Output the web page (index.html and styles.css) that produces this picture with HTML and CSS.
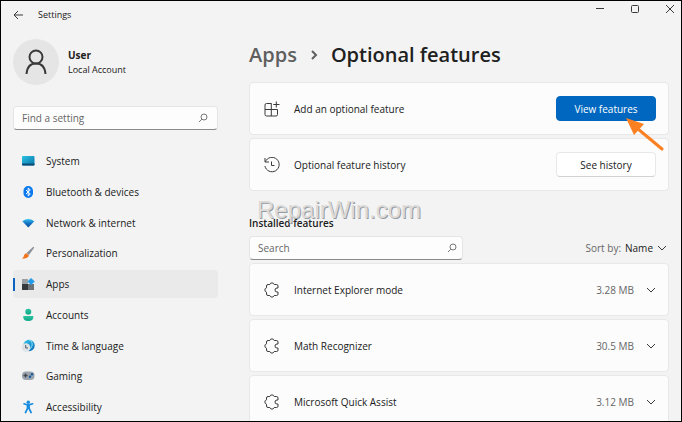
FILE: index.html
```html
<!DOCTYPE html>
<html lang="en">
<head>
<meta charset="utf-8">
<title>Settings</title>
<link rel="stylesheet" href="styles.css">
</head>
<body>
<svg class="defs" aria-hidden="true">
  <defs>
    <linearGradient id="sys" x1="0" y1="0" x2="1" y2="1"><stop offset="0" stop-color="#2bc3e2"/><stop offset="1" stop-color="#0873a8"/></linearGradient>
    <linearGradient id="net" x1="0" y1="0" x2="0" y2="1"><stop offset="0" stop-color="#35c5f0"/><stop offset=".5" stop-color="#1673c5"/><stop offset="1" stop-color="#0b4a94"/></linearGradient>
    <linearGradient id="acc" x1="0" y1="0" x2="0" y2="1"><stop offset="0" stop-color="#2bc2a0"/><stop offset="1" stop-color="#0fa98a"/></linearGradient>
    <linearGradient id="globe" x1="0" y1="0" x2="1" y2="1"><stop offset="0" stop-color="#35c8ef"/><stop offset="1" stop-color="#0868b4"/></linearGradient>
    <symbol id="puzzle" viewBox="0 0 16 16"><path d="M2.500 4Q2.500 2.500 4 2.500H5.800A2.300 2.300 0 0 1 10.200 2.500H12.500Q14 2.500 14 4V6H13A2 2 0 0 0 13 10H14V12Q14 13.500 12.500 13.500H10.200A2.300 2.300 0 0 1 5.800 13.500H4Q2.500 13.500 2.500 12V10.200A2.300 2.300 0 0 1 2.500 5.800Z"/></symbol>
    <symbol id="lens" viewBox="0 0 10 10"><circle cx="6" cy="4" r="3"/><path d="M3.800 6.200L1 9"/></symbol>
    <symbol id="down" viewBox="0 0 10 10"><path d="M1 3L5 7L9 3"/></symbol>
  </defs>
</svg>
<div class="window">
  <aside class="sidebar">
    <header class="titlebar">
      <button class="plain" aria-label="Back"><svg class="line" width="10" height="10" viewBox="0 0 10 10"><path d="M5 1L1 5L5 9M1 5H10"/></svg></button>
      <span>Settings</span>
    </header>
    <div class="profile">
      <div class="avatar"><svg class="line" width="22" height="26" viewBox="0 0 22 26"><circle cx="11" cy="8" r="6.500"/><path d="M1.500 25C2 18.500 5.500 14.500 11 14.500S20 18.500 20.500 25"/></svg></div>
      <div><strong>User</strong><p>Local Account</p></div>
    </div>
    <div class="search">
      <input type="text" placeholder="Find a setting" aria-label="Find a setting">
      <svg class="line" width="10" height="10"><use href="#lens"/></svg>
    </div>
    <nav class="nav">
      <a href="#"><svg width="14" height="14" viewBox="0 0 14 14"><rect x="1" y="2" width="12.500" height="9.500" rx="1" fill="url(#sys)"/><path d="M1 9.500H13.500V10.500Q13.500 11.500 12.500 11.500H2Q1 11.500 1 10.500Z" fill="#0c4c75"/></svg>System</a>
      <a href="#"><svg width="14" height="14" viewBox="0 0 14 14"><rect x="2.500" y="1" width="9.500" height="12" rx="4.700" fill="#0b78ee"/><path d="M5 5L9.300 9L7.200 11V3L9.300 5L5 9" fill="none" stroke="#fff"/></svg>Bluetooth &amp; devices</a>
      <a href="#"><svg width="14" height="14" viewBox="0 0 14 14"><path d="M1.300 5.300Q7.300 .5 13.300 5.300L7.300 11.500Z" fill="url(#net)"/></svg>Network &amp; internet</a>
      <a href="#"><svg width="14" height="14" viewBox="0 0 14 14"><path d="M12 1Q13.500 .3 13 2L8 9L5.500 7Z" fill="#8b929a"/><path d="M5.300 7.200L7.900 9.200Q7.500 12.500 1 12.800Q2.800 11.500 3 9.500Q3.300 7.500 5.300 7.200" fill="#ee741e"/></svg>Personalization</a>
      <a href="#" class="current" aria-current="page"><svg width="14" height="14" viewBox="0 0 14 14"><path d="M1 2H7V7H1Z" fill="#9ba0a5"/><path d="M1 7H7V13H1Z" fill="#35393e"/><path d="M7 7H13V13H7Z" fill="#6d7277"/><path d="M10 1L13.800 4.500L10 8L6.500 4.500Z" fill="#249bea"/></svg>Apps</a>
      <a href="#"><svg width="14" height="14" viewBox="0 0 14 14"><circle cx="7.300" cy="3.800" r="3" fill="url(#acc)"/><path d="M2.300 8H12.300Q13 13 7.300 13T2.300 8" fill="url(#acc)"/></svg>Accounts</a>
      <a href="#"><svg width="14" height="14" viewBox="0 0 14 14"><circle cx="8" cy="6.500" r="5.700" fill="url(#globe)"/><path d="M8 1Q12 2 11 7Q10 10 7 11" fill="none" stroke="#8fe2f6"/><circle cx="5" cy="8.500" r="4.300" fill="#dce2e6"/><path d="M4.700 6V9H7" fill="none" stroke="#4d5b65"/></svg>Time &amp; language</a>
      <a href="#"><svg width="14" height="14" viewBox="0 0 14 14"><rect x="1" y="2.500" width="12.500" height="8.500" rx="4" fill="#9ca4ad"/><path d="M4.500 4.500V8.500M2.500 6.500H6.500" stroke="#42484e" stroke-width="1.300"/><circle cx="9" cy="7.800" r="1.200" fill="#17599f"/><circle cx="11" cy="5.300" r="1.200" fill="#17599f"/></svg>Gaming</a>
      <a href="#"><svg width="14" height="14" viewBox="0 0 14 14"><circle cx="7.300" cy="2.300" r="1.700" fill="#168ce0"/><path d="M3 3.800L7.300 5L11.600 3.800M7.300 5V8M6.500 5.500V8.500L4.500 12.500M8.100 5.500V8.500L10.100 12.500" fill="none" stroke="#168ce0" stroke-width="1.700" stroke-linecap="round"/></svg>Accessibility</a>
    </nav>
  </aside>
  <main class="content">
    <div class="controls">
      <button class="plain" aria-label="Minimize"><svg class="line" width="8" height="8"><path d="M0 3.500H8"/></svg></button>
      <button class="plain" aria-label="Maximize"><svg class="line" width="8" height="8"><rect x=".5" y=".5" width="7" height="7" rx="1"/></svg></button>
      <button class="plain" aria-label="Close"><svg class="line" width="8" height="8"><path d="M0 0L8 8M8 0L0 8"/></svg></button>
    </div>
    <h1><a href="#">Apps</a><svg class="line" width="8" height="10" viewBox="0 0 8 10"><path d="M2 1L6 5L2 9"/></svg><span>Optional features</span></h1>
    <section class="cards">
      <div class="card">
        <svg class="line" width="16" height="16" viewBox="0 0 16 16"><path d="M7.500 2.500H2.500Q1 2.500 1 4V13.500Q1 15 2.500 15H12Q13.500 15 13.500 13.500V8.500H1M7.300 2.500V15M12.300 .5V6.500M9.300 3.500H15.500"/></svg>
        <span class="name">Add an optional feature</span>
        <button class="button primary">View features</button>
        <svg class="pointer" width="38" height="34" viewBox="0 0 38 34"><path d="M36 31L12 11" stroke="#fb8022" stroke-width="3" stroke-linecap="round"/><path d="M0 0L18 6L8 17Z" fill="#fb8022"/></svg>
      </div>
      <div class="card">
        <svg class="line" width="16" height="16" viewBox="0 0 16 16"><path d="M1 1V5H5M1.300 4.800A7.200 7.200 0 1 1 .9 9M7.500 4.500V8.500H10.500"/></svg>
        <span class="name">Optional feature history</span>
        <button class="button">See history</button>
      </div>
    </section>
    <h2>Installed features<span class="watermark">RepairWin.com</span></h2>
    <div class="filters">
      <div class="search">
        <input type="text" placeholder="Search" aria-label="Search installed features">
        <svg class="line" width="10" height="10"><use href="#lens"/></svg>
      </div>
      <button class="plain sort"><span>Sort by:</span> Name<svg class="line" width="10" height="10"><use href="#down"/></svg></button>
    </div>
    <section class="cards">
      <div class="card"><svg class="line" width="16" height="16"><use href="#puzzle"/></svg><span class="name">Internet Explorer mode</span><span class="size">3.28 MB</span><button class="plain" aria-label="Expand Internet Explorer mode"><svg class="line" width="10" height="10"><use href="#down"/></svg></button></div>
      <div class="card"><svg class="line" width="16" height="16"><use href="#puzzle"/></svg><span class="name">Math Recognizer</span><span class="size">30.5 MB</span><button class="plain" aria-label="Expand Math Recognizer"><svg class="line" width="10" height="10"><use href="#down"/></svg></button></div>
      <div class="card"><svg class="line" width="16" height="16"><use href="#puzzle"/></svg><span class="name">Microsoft Quick Assist</span><span class="size">3.12 MB</span><button class="plain" aria-label="Expand Microsoft Quick Assist"><svg class="line" width="10" height="10"><use href="#down"/></svg></button></div>
    </section>
  </main>
</div>
</body>
</html>
```
FILE: styles.css
```css
* { box-sizing: border-box; }
body, h1, h2, p { margin: 0; }
body {
  font: 10px/16px "Open Sans", "Noto Sans", sans-serif;
  color: #202020;
  background: #f3f3f3;
}
button, input { font: inherit; color: inherit; }
a { color: inherit; text-decoration: none; }
svg { display: block; flex: none; }
.defs { position: absolute; width: 0; height: 0; }
.line { fill: none; stroke: #3a3a3a; }
.plain { display: block; padding: 0; border: 0; background: none; }

.window {
  display: grid;
  grid-template-columns: 217px minmax(0, 1fr);
  grid-template-rows: minmax(0, 1fr);
  column-gap: 31px;
  height: 100vh;
  padding-right: 12px;
  border: 1px solid #000;
  overflow: hidden;
}

.sidebar {
  display: flex;
  flex-direction: column;
  min-height: 0;
  padding-left: 12px;
}
.titlebar {
  display: flex;
  align-items: center;
  gap: 15px;
  height: 28px;
  font-size: 9px;
}
.profile {
  display: flex;
  align-items: center;
  gap: 9px;
  margin-top: 10px;
  font-size: 9px;
  line-height: 14px;
}
.profile strong { font-size: 10px; }
.avatar {
  display: grid;
  place-items: center;
  width: 46px;
  height: 46px;
  border-radius: 50%;
  background: #e5e5e5;
}
.avatar .line { stroke-width: 2; }

.search {
  display: flex;
  align-items: center;
  height: 24px;
  padding: 0 9px 0 8px;
  border: 1px solid #e5e5e5;
  border-bottom-color: #8a8a8a;
  border-radius: 4px;
  background: #fdfdfd;
}
.search input {
  flex: 1;
  min-width: 0;
  padding: 0;
  border: 0;
  outline: 0;
  background: none;
}
.search input::placeholder { color: #666; opacity: 1; }
.search .line { stroke: #777; }
.sidebar .search { margin-top: 21px; }

.nav {
  display: flex;
  flex: 1;
  flex-direction: column;
  justify-content: space-between;
  margin-top: 17px;
}
.nav a {
  display: flex;
  align-items: center;
  gap: 11px;
  height: 28px;
  padding-left: 8px;
  border-radius: 4px;
}
.nav .current {
  background: linear-gradient(#0a63c0, #0a63c0) 0 50% / 2px 13px no-repeat #eaeaea;
}

.content { min-width: 0; }
.controls {
  display: flex;
  justify-content: flex-end;
  align-items: center;
  gap: 27px;
  height: 15px;
  margin-right: -5px;
}
h1 {
  display: flex;
  align-items: center;
  gap: 13px;
  height: 26px;
  margin: 26px 0 14px;
  font-size: 20px;
  line-height: 26px;
  font-weight: 600;
}
h1 a { color: #5f5f5f; }
h1 .line { stroke: #5f5f5f; stroke-width: 2; }

.cards { display: grid; gap: 3px; }
.card {
  position: relative;
  display: flex;
  align-items: center;
  gap: 14px;
  height: 53px;
  padding: 0 12px 0 14px;
  border: 1px solid #e8e8e8;
  border-radius: 4px;
  background: #fcfcfc;
}
.name { flex: 1; }
.size { color: #666; margin-right: -2px; }
.button {
  width: 100px;
  height: 25px;
  padding: 0;
  border: 1px solid #e8e8e8;
  border-bottom-color: #d2d2d2;
  border-radius: 4px;
  background: #fff;
}
.primary { border-color: #0067c0; background: #0067c0; color: #fff; }
.pointer { position: absolute; z-index: 1; top: 35px; right: 4px; }

h2 {
  position: relative;
  margin: 24px 0 5px;
  font-size: 10px;
  line-height: 16px;
  font-weight: 600;
}
.watermark {
  position: absolute;
  left: 8px;
  bottom: 8px;
  font: 24px/26px "Liberation Sans", sans-serif;
  color: #dedad6;
  text-shadow: 1px 1px #949ca6;
}
.filters {
  display: flex;
  align-items: center;
  justify-content: space-between;
  margin-bottom: 3px;
}
.filters .search { width: 51%; padding-right: 5px; }
.sort { display: flex; align-items: center; gap: 4px; margin-right: 2px; font-weight: 500; }
.sort span { color: #666; font-weight: 400; }
```
